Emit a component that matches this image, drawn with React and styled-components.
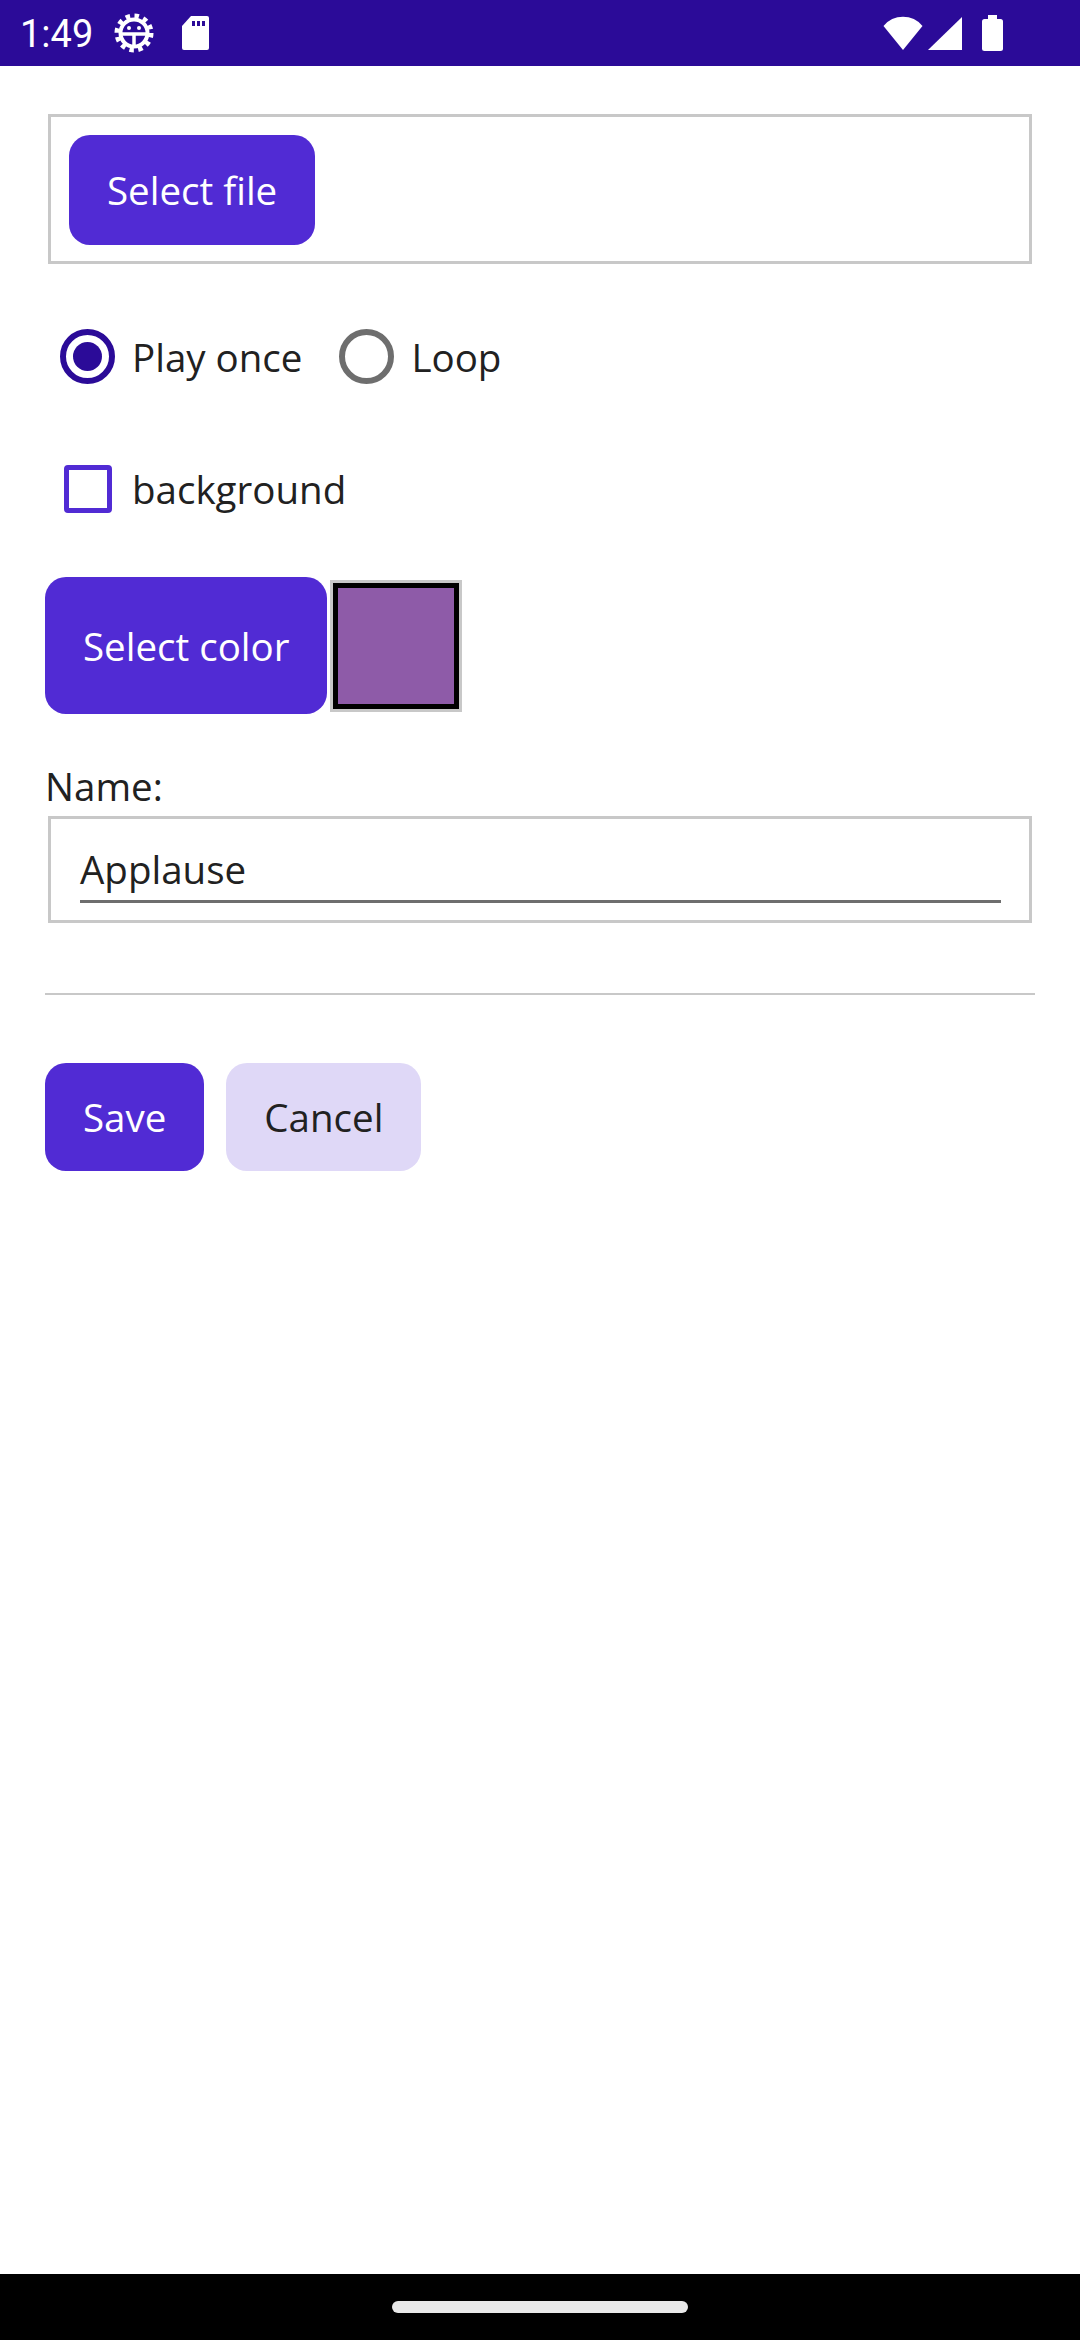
import React from "react";
import styled, { createGlobalStyle } from "styled-components";

const GlobalStyle = createGlobalStyle`
  html, body {
    margin: 0;
    padding: 0;
    background: #ffffff;
  }
  body {
    font-family: "Open Sans", "Noto Sans", sans-serif;
    color: #212121;
  }
`;

const Screen = styled.div`
  width: 1080px;
  height: 2340px;
  display: flex;
  flex-direction: column;
  background: #ffffff;
  overflow: hidden;
`;

const StatusBar = styled.header`
  flex: none;
  height: 66px;
  display: flex;
  align-items: center;
  padding: 0 77px 0 20px;
  background: #2b0b98;
  color: #ffffff;
`;

const Clock = styled.span`
  font-family: Roboto, sans-serif;
  font-size: 38px;
  line-height: 66px;
  padding-top: 2px;
`;

const StatusIcon = styled.svg`
  flex: none;
  display: block;
  margin-left: ${props => props.$ml || 0}px;
`;

const Spacer = styled.div`
  flex: 1;
`;

const Content = styled.main`
  flex: 1;
  display: flex;
  flex-direction: column;
  padding: 48px 45px 0;
`;

const FileBox = styled.div`
  margin: 0 3px;
  height: 150px;
  box-sizing: border-box;
  border: 3px solid #c8c8c8;
  padding: 18px;
  display: flex;
  align-items: flex-start;
`;

const Button = styled.button`
  flex: none;
  height: ${props => props.$height || 110}px;
  padding: 0 38px;
  border: none;
  border-radius: 21px;
  background: ${props => (props.$secondary ? "#dfd8f7" : "#512bd4")};
  color: ${props => (props.$secondary ? "#212121" : "#ffffff")};
  font-family: "Open Sans", sans-serif;
  font-size: 38.5px;
  line-height: 50px;
  cursor: pointer;
`;

const RadioGroup = styled.div`
  margin-top: 65px;
  padding-left: 15px;
  height: 55px;
  display: flex;
  align-items: center;
`;

const RadioOption = styled.label`
  display: flex;
  align-items: center;
  gap: 17px;
  margin-right: 37px;
  font-size: 38.5px;
  line-height: 50px;
`;

const RadioCircle = styled.span`
  width: 55px;
  height: 55px;
  box-sizing: border-box;
  border: 6px solid ${props => (props.$checked ? "#2b0b98" : "#6e6e6e")};
  border-radius: 50%;
  display: flex;
  align-items: center;
  justify-content: center;

  &::after {
    content: "";
    width: 29px;
    height: 29px;
    border-radius: 50%;
    background: #2b0b98;
    display: ${props => (props.$checked ? "block" : "none")};
  }
`;

const CheckRow = styled.label`
  margin-top: 80px;
  padding-left: 19px;
  height: 50px;
  display: flex;
  align-items: center;
  gap: 20px;
  font-size: 38.5px;
  line-height: 50px;
`;

const CheckBox = styled.span`
  width: 48px;
  height: 48px;
  box-sizing: border-box;
  border: 5px solid #512bd4;
  border-radius: 4px;
`;

const ColorRow = styled.div`
  margin-top: 63px;
  display: flex;
  align-items: center;
  gap: 3px;
`;

const Swatch = styled.div`
  width: 132px;
  height: 132px;
  box-sizing: border-box;
  border: 3px solid #c8c8c8;
  padding: 5px;
  background: #000000;
`;

const SwatchFill = styled.div`
  width: 100%;
  height: 100%;
  background: ${props => props.$color};
`;

const FieldLabel = styled.div`
  margin-top: 47px;
  font-size: 38.5px;
  line-height: 50px;
`;

const EntryBox = styled.div`
  margin: 5px 3px 0;
  height: 107px;
  box-sizing: border-box;
  border: 3px solid #c8c8c8;
  padding: 0 28px 17px 29px;
  display: flex;
  align-items: flex-end;
`;

const EntryField = styled.div`
  flex: 1;
  font-size: 38.5px;
  line-height: 50px;
  padding-bottom: 6px;
  border-bottom: 3px solid #6e6e6e;
`;

const Divider = styled.hr`
  margin: 70px 0 0;
  height: 2px;
  border: none;
  background: #c8c8c8;
`;

const Actions = styled.div`
  margin-top: 68px;
  display: flex;
  gap: 22px;
`;

const NavBar = styled.footer`
  flex: none;
  height: 66px;
  background: #000000;
  display: flex;
  align-items: center;
  justify-content: center;
`;

const HomePill = styled.div`
  width: 296px;
  height: 12px;
  border-radius: 6px;
  background: #e9e9e9;
`;

const DebugIcon = () => (
  <StatusIcon $ml={21} width="40" height="40" viewBox="0 0 40 40">
    <circle cx="20" cy="20" r="17" fill="none" stroke="#fff" strokeWidth="5" strokeDasharray="4.45 4.45" />
    <circle cx="20" cy="20" r="13.5" fill="none" stroke="#fff" strokeWidth="4" />
    <line x1="7" y1="21" x2="33" y2="21" stroke="#fff" strokeWidth="3.5" />
    <line x1="20" y1="21" x2="20" y2="33" stroke="#fff" strokeWidth="3.5" />
    <circle cx="15" cy="15" r="2" fill="#fff" />
    <circle cx="25" cy="15" r="2" fill="#fff" />
  </StatusIcon>
);

const SdCardIcon = () => (
  <StatusIcon $ml={28} width="27" height="34" viewBox="0 0 27 34">
    <path d="M9 0H25a2 2 0 0 1 2 2V32a2 2 0 0 1-2 2H2a2 2 0 0 1-2-2V10Z" fill="#fff" />
    <rect x="10" y="5" width="3" height="5" fill="#2b0b98" />
    <rect x="15" y="5" width="3" height="5" fill="#2b0b98" />
    <rect x="20" y="5" width="3" height="5" fill="#2b0b98" />
  </StatusIcon>
);

const WifiIcon = () => (
  <StatusIcon width="40" height="34" viewBox="0 0 40 34">
    <path d="M20 34L0.5 10A25 25 0 0 1 39.5 10Z" fill="#fff" />
  </StatusIcon>
);

const SignalIcon = () => (
  <StatusIcon $ml={5} width="34" height="33" viewBox="0 0 34 33">
    <path d="M34 0V33H0Z" fill="#fff" />
  </StatusIcon>
);

const BatteryIcon = () => (
  <StatusIcon $ml={20} width="21" height="36" viewBox="0 0 21 36">
    <rect x="6" y="0" width="9" height="5" fill="#fff" />
    <rect x="0" y="4" width="21" height="32" rx="2.5" fill="#fff" />
  </StatusIcon>
);

const Radio = ({ checked, children }) => (
  <RadioOption>
    <RadioCircle $checked={checked} />
    {children}
  </RadioOption>
);

export default function App() {
  return (
    <Screen>
      <GlobalStyle />
      <StatusBar>
        <Clock>1:49</Clock>
        <DebugIcon />
        <SdCardIcon />
        <Spacer />
        <WifiIcon />
        <SignalIcon />
        <BatteryIcon />
      </StatusBar>

      <Content>
        <FileBox>
          <Button>Select file</Button>
        </FileBox>

        <RadioGroup>
          <Radio checked>Play once</Radio>
          <Radio>Loop</Radio>
        </RadioGroup>

        <CheckRow>
          <CheckBox />
          background
        </CheckRow>

        <ColorRow>
          <Button $height={137}>Select color</Button>
          <Swatch>
            <SwatchFill $color="#8e5ba8" />
          </Swatch>
        </ColorRow>

        <FieldLabel>Name:</FieldLabel>
        <EntryBox>
          <EntryField>Applause</EntryField>
        </EntryBox>

        <Divider />

        <Actions>
          <Button $height={108}>Save</Button>
          <Button $height={108} $secondary>Cancel</Button>
        </Actions>
      </Content>

      <NavBar>
        <HomePill />
      </NavBar>
    </Screen>
  );
}
